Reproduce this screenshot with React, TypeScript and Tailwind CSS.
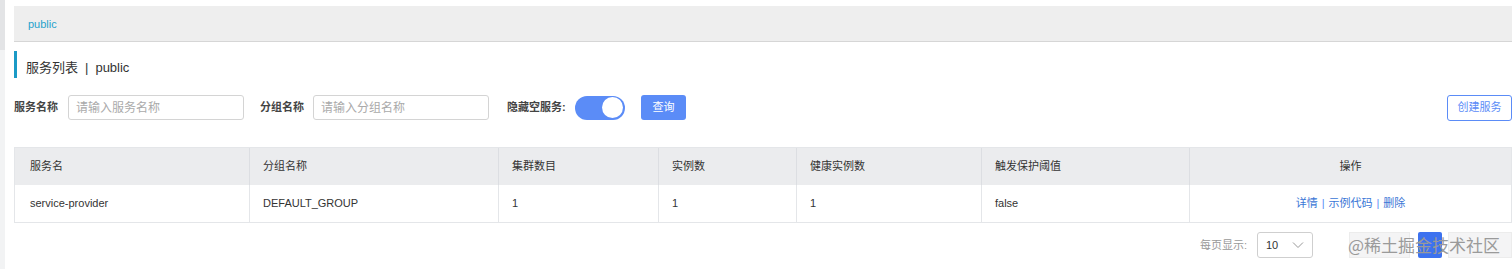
import React from 'react';

// Nacos-style service list page

const font = { fontFamily: '"Liberation Sans", "Noto Sans CJK SC", sans-serif' };

const cols = [
  { title: '服务名', w: 'w-[234px]', value: 'service-provider' },
  { title: '分组名称', w: 'w-[249px]', value: 'DEFAULT_GROUP' },
  { title: '集群数目', w: 'w-[160px]', value: '1' },
  { title: '实例数', w: 'w-[138px]', value: '1' },
  { title: '健康实例数', w: 'w-[185px]', value: '1' },
  { title: '触发保护阈值', w: 'w-[208px]', value: 'false' },
];

export default function App() {
  return (
    <div className="flex w-full h-[269px] bg-white overflow-hidden" style={font}>
      {/* sidebar edge */}
      <div className="w-[5px] flex flex-col">
        <div className="h-[50px] bg-[#e3e4e6]" />
        <div className="flex-1 bg-[#f2f3f4]" />
      </div>

      <div className="flex-1 flex flex-col pl-[9px]">
        {/* breadcrumb bar */}
        <div className="mt-[6px] h-[36px] bg-[#eeeeee] border-b border-[#d6d6d6] flex items-center pl-[14px] pt-[2px]">
          <span className="text-[11px] text-[#26a2cc]">public</span>
        </div>

        {/* title */}
        <div className="mt-[9px] h-[27px] border-l-[3px] border-[#1b9ac6] pl-[9px] pt-[6px] flex items-center text-[13px] text-[#333]">
          <span>服务列表</span>
          <span className="mx-[7px]">|</span>
          <span>public</span>
        </div>

        {/* filters */}
        <div className="mt-[17px] h-[25px] flex items-center text-[11px]">
          <span className="font-bold text-[#444] w-[54px]">服务名称</span>
          <div className="w-[176px] h-[25px] border border-[#d4d4d4] rounded-[3px] flex items-center px-[7px] text-[12px] text-[#aaa]">
            请输入服务名称
          </div>
          <span className="font-bold text-[#444] ml-[16px] w-[53px]">分组名称</span>
          <div className="w-[176px] h-[25px] border border-[#d4d4d4] rounded-[3px] flex items-center px-[7px] text-[12px] text-[#aaa]">
            请输入分组名称
          </div>
          <span className="font-bold text-[#444] ml-[18px] w-[68px]">隐藏空服务:</span>
          <div className="w-[50px] h-[24px] rounded-full bg-[#5b8cf7] flex items-center justify-end pr-[2px]">
            <div className="w-[21px] h-[21px] rounded-full bg-white" />
          </div>
          <button className="ml-[16px] w-[45px] h-[25px] rounded-[3px] bg-[#5b8cf7] text-white text-[11px]">查询</button>
          <div className="flex-1" />
          <button className="w-[65px] h-[26px] rounded-[3px] border border-[#5b8cf7] text-[#5b8cf7] text-[11px] bg-white">
            创建服务
          </button>
        </div>

        {/* table */}
        <div className="mt-[27px] border border-[#e4e6e9] text-[11px] text-[#333]">
          <div className="flex h-[37px] bg-[#ebecee]">
            {cols.map((c, i) => (
              <div
                key={c.title}
                className={`${c.w} flex items-center ${i > 0 ? 'pl-[13px] border-l border-[#dcdee2]' : 'pl-[15px]'}`}
              >
                {c.title}
              </div>
            ))}
            <div className="flex-1 flex items-center justify-center border-l border-[#dcdee2]">操作</div>
          </div>
          <div className="flex h-[37px] bg-white">
            {cols.map((c, i) => (
              <div
                key={c.title}
                className={`${c.w} flex items-center ${i > 0 ? 'pl-[13px] border-l border-[#e4e6e9]' : 'pl-[15px]'}`}
              >
                {c.value}
              </div>
            ))}
            <div className="flex-1 flex items-center justify-center border-l border-[#e4e6e9] text-[#3a76d6]">
              <span>详情</span>
              <span className="mx-[4px] text-[#5b8cf7]">|</span>
              <span>示例代码</span>
              <span className="mx-[4px] text-[#5b8cf7]">|</span>
              <span>删除</span>
            </div>
          </div>
        </div>

        {/* pagination */}
        <div className="mt-[9px] h-[26px] flex items-center justify-end text-[11px] relative">
          <span className="text-[#999]">每页显示:</span>
          <div className="ml-[10px] w-[56px] h-[26px] border border-[#cfcfcf] rounded-[3px] flex items-center justify-between px-[8px] text-[#333]">
            <span>10</span>
            <svg width="12" height="8" viewBox="0 0 12 8" fill="none" stroke="#999" strokeWidth="1">
              <path d="M1 1.5l5 5 5-5" />
            </svg>
          </div>
          <div className="ml-[36px] w-[61px] h-[26px] bg-[#f4f4f5] border border-[#ececec]" />
          <div className="ml-[8px] w-[24px] h-[26px] bg-[#3d72ef] rounded-[2px]" />
          <div className="ml-[6px] w-[64px] h-[26px] bg-[#f4f4f5] border border-[#ececec]" />
          <span
            className="absolute right-[12px] top-[4px] text-[17px] text-[#9a9a9a] whitespace-nowrap leading-none"
            style={{ fontFamily: '"Noto Sans CJK SC", sans-serif' }}
          >
            @稀土掘金技术社区
          </span>
        </div>
      </div>
    </div>
  );
}
